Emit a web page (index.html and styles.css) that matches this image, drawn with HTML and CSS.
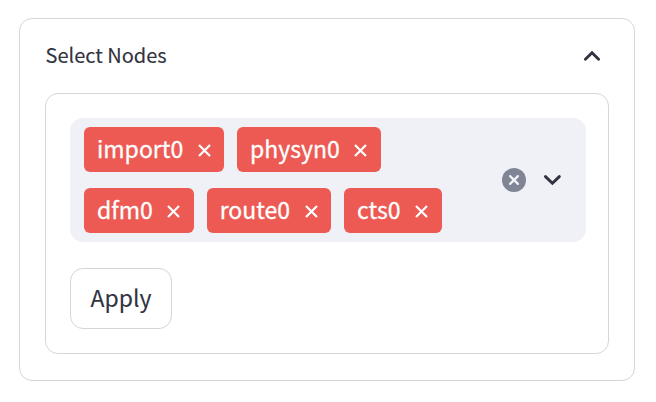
FILE: index.html
```html
<!DOCTYPE html>
<html lang="en">
<head>
<meta charset="utf-8">
<title>Select Nodes</title>
<link rel="stylesheet" href="styles.css">
</head>
<body>
<section class="expander">
  <header class="expander-header">
    <span class="title">Select Nodes</span>
    <svg class="chevron" width="18" height="12" viewBox="0 0 18 12"><path d="M2.4 9.2 9 2.8 15.6 9.2"/></svg>
  </header>
  <form class="form">
    <div class="multiselect">
      <div class="tags">
        <span class="tag"><span class="label">import0</span><svg class="remove" width="13" height="13" viewBox="0 0 13 13"><path d="M1 1 12 12M12 1 1 12"/></svg></span>
        <span class="tag"><span class="label">physyn0</span><svg class="remove" width="13" height="13" viewBox="0 0 13 13"><path d="M1 1 12 12M12 1 1 12"/></svg></span>
        <span class="tag"><span class="label">dfm0</span><svg class="remove" width="13" height="13" viewBox="0 0 13 13"><path d="M1 1 12 12M12 1 1 12"/></svg></span>
        <span class="tag"><span class="label">route0</span><svg class="remove" width="13" height="13" viewBox="0 0 13 13"><path d="M1 1 12 12M12 1 1 12"/></svg></span>
        <span class="tag"><span class="label">cts0</span><svg class="remove" width="13" height="13" viewBox="0 0 13 13"><path d="M1 1 12 12M12 1 1 12"/></svg></span>
      </div>
      <div class="controls">
        <svg width="24" height="24" viewBox="0 0 24 24"><circle cx="12" cy="12" r="12" fill="#808495"/><path class="clear-mark" d="M8.1 8.1 15.9 15.9M15.9 8.1 8.1 15.9"/></svg>
        <svg class="chevron" width="18" height="12" viewBox="0 0 18 12"><path d="M2.5 2.6 9.4 9.2 16.3 2.6"/></svg>
      </div>
    </div>
    <button class="apply" type="button">Apply</button>
  </form>
</section>
</body>
</html>
```

FILE: styles.css
```css
* { box-sizing: border-box; }

body {
  margin: 0;
  padding: 18px 21px 21px 19px;
  background: #fff;
  color: #31333f;
  font-family: "Noto Sans CJK SC", sans-serif;
  -webkit-text-stroke: 0.12px;
}

svg { display: block; flex: none; fill: none; }

.expander {
  height: 363px;
  padding: 0 25px;
  border: 1px solid #d6d6d8;
  border-radius: 13px;
}

.expander-header {
  display: flex;
  align-items: center;
  justify-content: space-between;
  height: 74px;
  padding-right: 8px;
}

.title { padding: 0 0 2px 0.5px; font-size: 20px; line-height: 30px; }

.chevron { stroke: #31333f; stroke-width: 2.9; stroke-linecap: round; stroke-linejoin: miter; }

.form {
  height: 261px;
  padding: 24px 22px 24px 24px;
  border: 1px solid #d6d6d8;
  border-radius: 13px;
}

.multiselect {
  display: flex;
  align-items: center;
  justify-content: space-between;
  height: 124px;
  padding: 9px 25px 9px 14px;
  border-radius: 13px;
  background: #f0f1f6;
}

.tags {
  display: flex;
  flex-wrap: wrap;
  gap: 16px 12.8px;
  width: 390px;
}

.tag {
  display: flex;
  align-items: center;
  gap: 14.6px;
  height: 45px;
  padding: 0 13.5px 0 13px;
  border-radius: 6px;
  background: #ed5a53;
  color: #fff;
}

.label { padding-bottom: 2px; font-size: 23px; line-height: 43px; -webkit-text-stroke: 0.3px; }

.remove { margin-top: 2px; stroke: #fff; stroke-width: 2.2; }

.controls { display: flex; align-items: center; gap: 17px; }

.clear-mark { stroke: #f0f1f6; stroke-width: 2.3; stroke-linecap: round; }

.apply {
  display: block;
  width: 102px;
  height: 61px;
  margin-top: 26px;
  padding: 0 0 2px;
  border: 1px solid #d6d6d8;
  border-radius: 13px;
  background: #fff;
  color: #31333f;
  font: 23px/57px "Noto Sans CJK SC", sans-serif;
  -webkit-text-stroke: 0.12px;
}
```
